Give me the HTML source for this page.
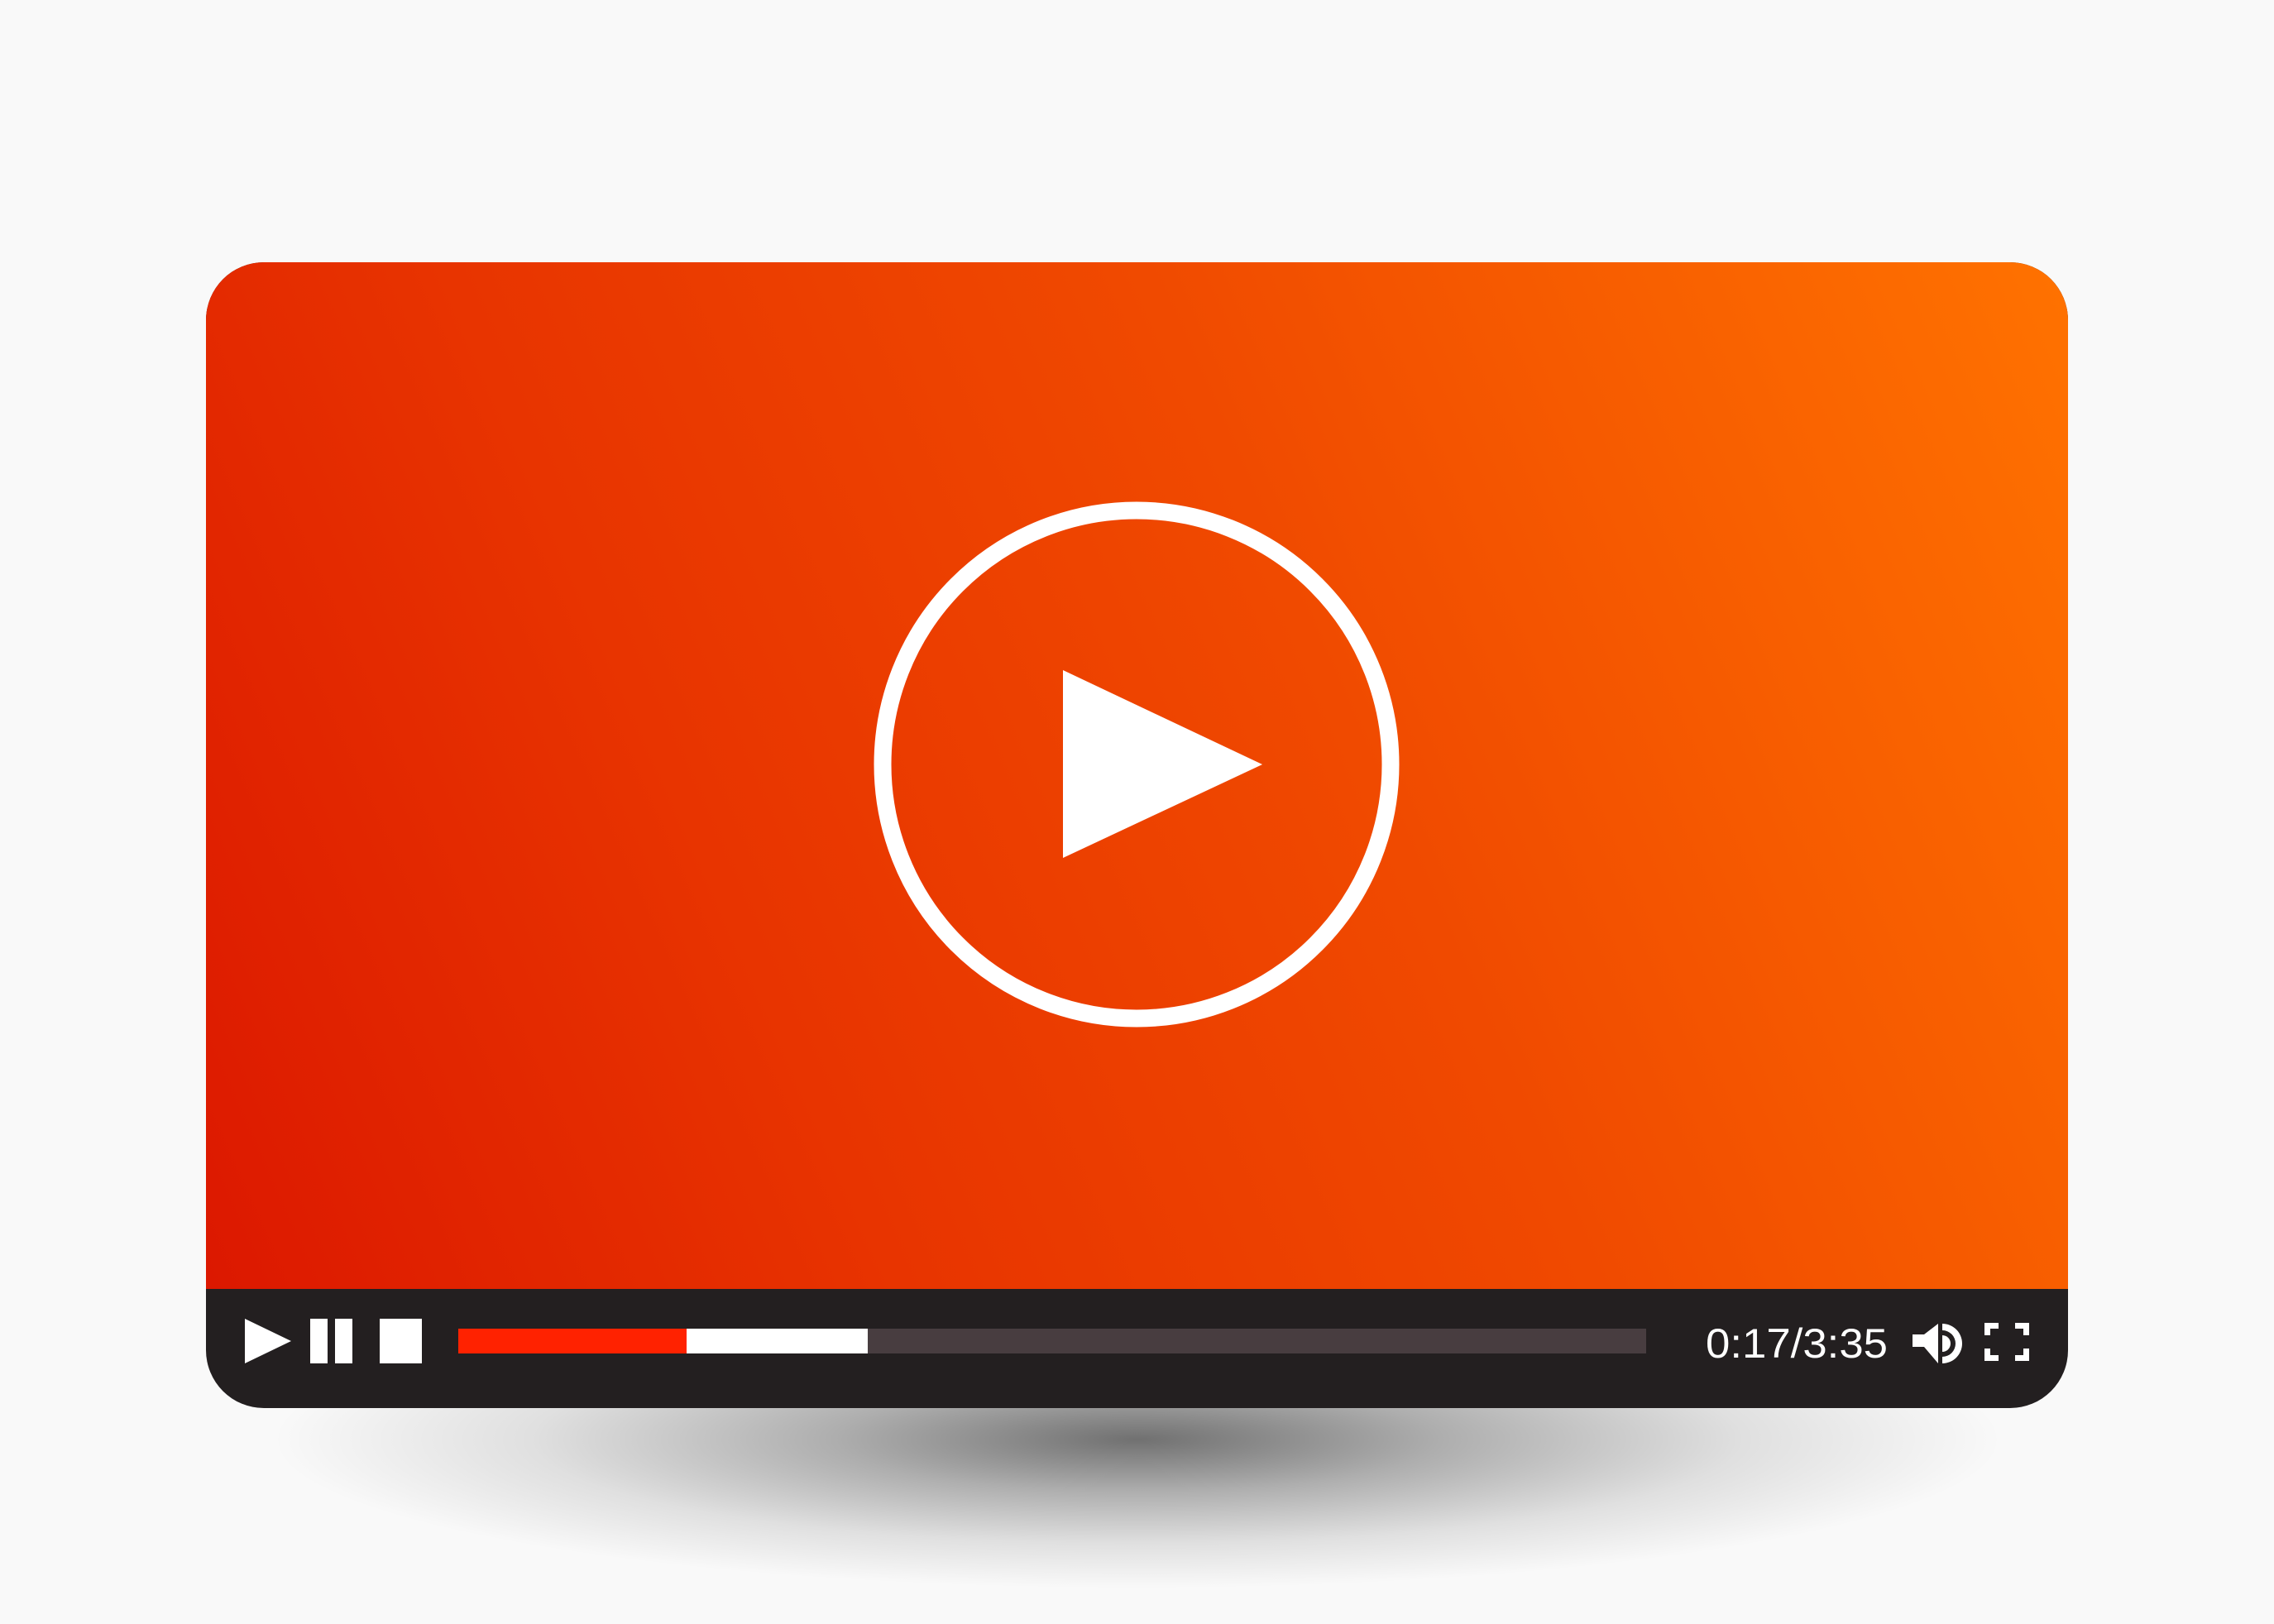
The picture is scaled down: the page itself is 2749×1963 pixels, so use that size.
<!DOCTYPE html>
<html><head><meta charset="utf-8"><style>
html,body{margin:0;padding:0;}
body{width:2749px;height:1963px;background:#f9f9f9;position:relative;overflow:hidden;font-family:"Liberation Sans",sans-serif;}
.shadow{position:absolute;left:330px;top:1560px;width:2090px;height:360px;background:radial-gradient(closest-side,rgba(0,0,0,0.55) 0%,rgba(0,0,0,0.3) 35%,rgba(0,0,0,0.1) 70%,rgba(0,0,0,0) 100%);}
.player{position:absolute;left:249px;top:317px;width:2251px;height:1385px;border-radius:70px;overflow:hidden;background:#231f20;}
.screen{position:absolute;left:0;top:0;width:100%;height:1241px;background:linear-gradient(66deg,#dc1800 0%,#e83400 30%,#f04a00 60%,#ff7200 100%);}
</style></head><body>
<div class="shadow"></div>
<div class="player">
  <div class="screen"></div>
</div>
<svg width="2749" height="1963" style="position:absolute;left:0;top:0">
  <circle cx="1374" cy="924" r="307" fill="none" stroke="#fff" stroke-width="21"/>
  <polygon points="1285,810 1526,924 1285,1037" fill="#fff"/>
  <polygon points="296,1594 352,1621 296,1648" fill="#fff"/>
  <rect x="375" y="1594" width="21" height="54" fill="#fff"/>
  <rect x="405" y="1594" width="21" height="54" fill="#fff"/>
  <rect x="459" y="1594" width="51" height="54" fill="#fff"/>
  <rect x="554" y="1606" width="276" height="30" fill="#ff2200"/>
  <rect x="830" y="1606" width="219" height="30" fill="#ffffff"/>
  <rect x="1049" y="1606" width="941" height="30" fill="#483d40"/>
  <text x="2062" y="1641" fill="#fff" font-family="Liberation Sans, sans-serif" font-size="50" textLength="220" lengthAdjust="spacingAndGlyphs">0:17/3:35</text>
  <rect x="2312" y="1613" width="16" height="15" fill="#fff"/>
  <polygon points="2326,1613 2343,1600 2343,1648 2326,1628" fill="#fff"/>
  <path d="M2348,1600 A24,24 0 0 1 2348,1648 L2348,1640 A16,16 0 0 0 2348,1608 Z" fill="#fff"/>
  <path d="M2348,1614 A10,10 0 0 1 2348,1634 Z" fill="#fff"/>
  <g fill="#fff">
    <path d="M2399,1599 h17 v7 h-10 v8 h-7z"/>
    <path d="M2453,1599 h-17 v7 h10 v8 h7z"/>
    <path d="M2399,1645 h17 v-7 h-10 v-8 h-7z"/>
    <path d="M2453,1645 h-17 v-7 h10 v-8 h7z"/>
  </g>
</svg>
</body></html>
